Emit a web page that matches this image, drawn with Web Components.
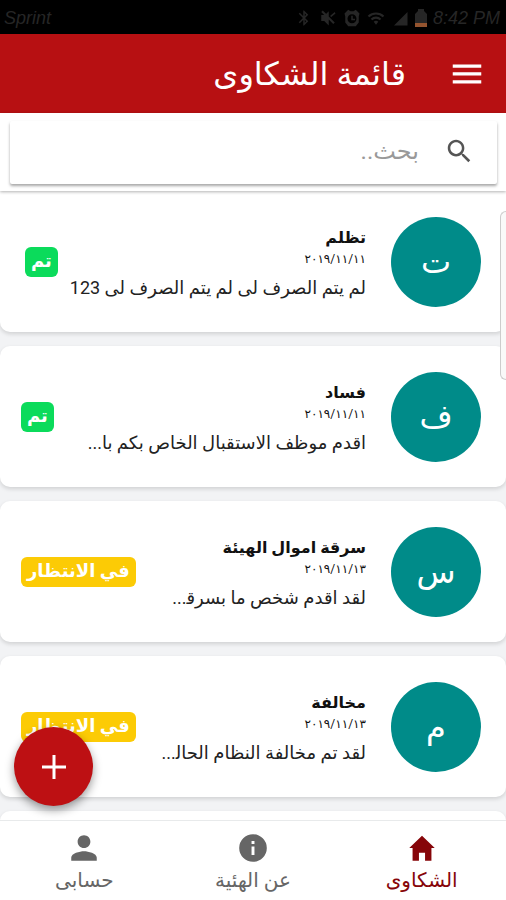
<!DOCTYPE html>
<html lang="ar" dir="rtl">
<head>
<meta charset="utf-8">
<meta name="viewport" content="width=device-width, initial-scale=1">
<title>قائمة الشكاوى</title>
<style>
html, body { margin: 0; height: 100%; }
body { font-family: Roboto, "DejaVu Sans", sans-serif; color: #111; background: #f2f3f5; }
</style>
</head>
<body>
<complaints-app></complaints-app>
<script>
const define = (name, html) => {
  const template = document.createElement('template');
  template.innerHTML = html;
  customElements.define(name, class extends HTMLElement {
    constructor() {
      super();
      this.attachShadow({ mode: 'open' }).append(template.content.cloneNode(true));
    }
  });
};

define('status-bar', `
<style>
:host { display: flex; direction: ltr; align-items: center; justify-content: space-between; height: 34px; box-sizing: border-box; padding: 2px 6px 0 4px; background: #000; color: #262626; font: italic 18px/20px "Liberation Sans", sans-serif; flex: none; }
.right { display: flex; align-items: center; gap: 6px; }
svg { width: 18px; height: 18px; fill: #262626; }
.battery { width: 12px; }
</style>
<span>Sprint</span>
<div class="right">
  <svg viewBox="0 0 24 24"><path d="M17.7 7.7 12 2h-1v7.6L6.4 5 5 6.4l5.6 5.6L5 17.6 6.4 19l4.6-4.6V22h1l5.7-5.7-4.3-4.3zM13 5.8l1.9 1.9L13 9.600zm1.900 10.500L13 18.200v-3.800z"/></svg>
  <svg viewBox="0 0 24 24"><path d="M3 8v8h4l6 6v-8l6 6 2-2L5 2 3 4l4 4zM13 3 9 7l4 4zM15 9l6-5 1 2-6 5z"/></svg>
  <svg viewBox="0 0 24 24"><path fill-rule="evenodd" d="M2 6 7 1l3 2h4l3-2 5 5-1 4v8l-4 5H7l-4-5v-8zm10 1a6 6 0 1 0 0 12 6 6 0 0 0 0-12zm-1 2h2v4h3v2h-5z"/></svg>
  <svg viewBox="0 0 24 24"><path d="M1 9a16 16 0 0 1 22 0l-2 2a13 13 0 0 0-18 0zm4 4a10 10 0 0 1 14 0l-2 2a7 7 0 0 0-10 0zm4 4a4 4 0 0 1 6 0l-3 4z"/></svg>
  <svg viewBox="0 0 24 24"><path d="M22 4v18H4z"/></svg>
  <svg class="battery" viewBox="0 0 12 18"><path d="M3 0h6v2l3 3v9H0V5l3-3z"/><path fill="#94542f" d="M0 14h12v4H0z"/></svg>
  <span>8:42 PM</span>
</div>`);

define('app-header', `
<style>
:host { display: flex; align-items: center; gap: 42px; height: 79px; box-sizing: border-box; padding: 0 20px; background: #b71012; color: #fff; flex: none; }
button { all: unset; display: flex; cursor: pointer; }
svg { width: 38px; height: 38px; fill: #fff; }
h1 { margin: 0; font-size: 32px; line-height: 40px; font-weight: 400; }
</style>
<button type="button" aria-label="القائمة"><svg viewBox="0 0 512 512"><path d="M64 384h384v-43H64zm0-107h384v-43H64zM64 128v43h384v-43z"/></svg></button>
<h1><slot></slot></h1>`);

define('search-box', `
<style>
:host { display: block; height: 78px; box-sizing: border-box; padding: 8px 9px 7px 10px; background: #fff; box-shadow: 0 1px 3px rgba(0,0,0,.3); position: relative; z-index: 1; flex: none; }
label { display: flex; align-items: center; gap: 25px; height: 63px; box-sizing: border-box; padding: 0 23px 4px; border-radius: 2px; box-shadow: 0 2px 3px rgba(0,0,0,.35); }
svg { width: 30px; height: 30px; fill: #555; flex: none; }
input { flex: 1; min-width: 0; border: 0; outline: 0; padding: 0; background: none; font: 24px/32px Roboto, "DejaVu Sans", sans-serif; color: #333; }
input::placeholder { color: #999; opacity: 1; }
</style>
<label>
  <svg viewBox="0 0 512 512"><path d="M337.500 305.400H320l-6.600-5.500c20.800-25.200 34-57 34-93.300C347.400 127.600 283.900 64 205.100 64 127.500 64 64 127.600 64 206.600s63.500 142.700 142.200 142.700c35 0 67.800-13.200 93-34l6.600 5.500v17.500L415.200 448l32.800-33zm-131.300 0c-54.700 0-98.400-44-98.400-98.800s43.700-98.700 98.400-98.700 98.500 43.900 98.500 98.700-43.800 98.800-98.500 98.800z"/></svg>
  <input type="text" aria-label="بحث" placeholder="بحث..">
</label>`);

define('status-badge', `
<style>
:host { display: block; flex: none; height: 30px; box-sizing: border-box; padding: 0 6px; border-radius: 6px; background: #0bdb5b; color: #fff; font-size: 18px; line-height: 28px; font-weight: 700; white-space: nowrap; }
:host([kind="waiting"]) { background: #fccb05; }
</style><slot></slot>`);

define('complaint-card', `
<style>
:host { display: flex; align-items: center; gap: 25px; height: 141px; box-sizing: border-box; padding: 0 25px 0 21px; border-radius: 10px; background: #fff; box-shadow: 0 2px 4px rgba(0,0,0,.14); flex: none; }
:host(:first-child) { border-radius: 0 0 10px 10px; }
.avatar { display: grid; place-items: center; width: 90px; height: 90px; border-radius: 50%; background: #008b89; color: #fff; font-size: 32px; line-height: 40px; flex: none; }
.body { flex: 1; min-width: 0; padding-top: 5px; white-space: nowrap; }
.title { font-size: 16px; line-height: 22px; font-weight: 700; margin: 0; }
.date { display: block; font-size: 12px; line-height: 20px; }
.message { margin: 5px 0 0; font-size: 18px; line-height: 28px; color: #222; }
.state { flex: none; margin-inline-start: -25px; }
</style>
<div class="avatar"><slot name="letter"></slot></div>
<div class="body">
  <h2 class="title"><slot name="title"></slot></h2>
  <span class="date"><slot name="date"></slot></span>
  <p class="message"><slot></slot></p>
</div>
<div class="state"><slot name="state"></slot></div>`);

define('add-button', `
<style>
:host { position: absolute; left: 14px; bottom: 14px; z-index: 2; }
button { display: grid; place-items: center; width: 79px; height: 79px; padding: 0; border: 0; border-radius: 50%; background: #bd1013; box-shadow: 0 4px 10px rgba(0,0,0,.4); cursor: pointer; }
svg { width: 24px; height: 24px; fill: #fff; }
</style>
<button type="button" aria-label="إضافة"><svg viewBox="0 0 24 24"><path d="M10.500 0h3v10.500H24v3H13.500V24h-3V13.500H0v-3h10.500z"/></svg></button>`);

define('nav-item', `
<style>
:host { flex: 1; }
a { display: flex; flex-direction: column; align-items: center; gap: 1px; padding: 10px 0 6px; color: #666; text-decoration: none; font-size: 20px; line-height: 28px; }
:host([active]) a { color: #860509; }
::slotted(svg) { width: 34px; height: 34px; fill: currentColor; }
</style>
<a href="#"><slot name="icon"></slot><span><slot></slot></span></a>`);

define('bottom-nav', `
<style>:host { display: flex; background: #fff; border-top: 1px solid #e8eaeb; flex: none; position: relative; z-index: 1; }</style><slot></slot>`);

define('complaints-app', `
<style>
:host { display: flex; flex-direction: column; height: 100vh; }
main { flex: 1; min-height: 0; position: relative; display: flex; flex-direction: column; }
.list { flex: 1; min-height: 0; overflow: hidden; display: flex; flex-direction: column; gap: 14px; }
.edge { position: absolute; right: 0; top: 20px; width: 5px; height: 167px; border: 1px solid #ccc; border-right: 0; border-radius: 6px 0 0 6px; background: #f9f9f9; }
.inset { margin-left: 4px; }
</style>
<status-bar></status-bar>
<app-header>قائمة الشكاوى</app-header>
<search-box></search-box>
<main>
  <div class="list">
    <complaint-card><span slot="letter">ت</span><span slot="title">تظلم</span><span slot="date">٢٠١٩/١١/١١</span>لم يتم الصرف لى لم يتم الصرف لى 123<status-badge slot="state" class="inset">تم</status-badge></complaint-card>
    <complaint-card><span slot="letter">ف</span><span slot="title">فساد</span><span slot="date">٢٠١٩/١١/١١</span>اقدم موظف الاستقبال الخاص بكم با...<status-badge slot="state">تم</status-badge></complaint-card>
    <complaint-card><span slot="letter">س</span><span slot="title">سرقة اموال الهيئة</span><span slot="date">٢٠١٩/١١/١٣</span>لقد اقدم شخص ما بسرق&zwj;...<status-badge slot="state" kind="waiting">في الانتظار</status-badge></complaint-card>
    <complaint-card><span slot="letter">م</span><span slot="title">مخالفة</span><span slot="date">٢٠١٩/١١/١٣</span>لقد تم مخالفة النظام الحال&zwj;...<status-badge slot="state" kind="waiting">في الانتظار</status-badge></complaint-card>
    <complaint-card></complaint-card>
  </div>
  <div class="edge"></div>
  <add-button></add-button>
</main>
<bottom-nav>
  <nav-item active><svg slot="icon" viewBox="0 0 512 512"><path d="M210 448V328h92v120h96V256h50L256 72 64 256h50v192z"/></svg>الشكاوى</nav-item>
  <nav-item><svg slot="icon" viewBox="0 0 512 512"><path d="M256 48a208 208 0 1 0 0 416 208 208 0 0 0 0-416zm22 312h-44V234h44zm0-166h-44v-42h44z"/></svg>عن الهئية</nav-item>
  <nav-item><svg slot="icon" viewBox="0 0 512 512"><path d="M256 256c53 0 96-43 96-96s-43-96-96-96-96 43-96 96 43 96 96 96zm0 48c-64 0-192 32-192 96v48h384v-48c0-64-128-96-192-96z"/></svg>حسابى</nav-item>
</bottom-nav>`);
</script>
</body>
</html>
